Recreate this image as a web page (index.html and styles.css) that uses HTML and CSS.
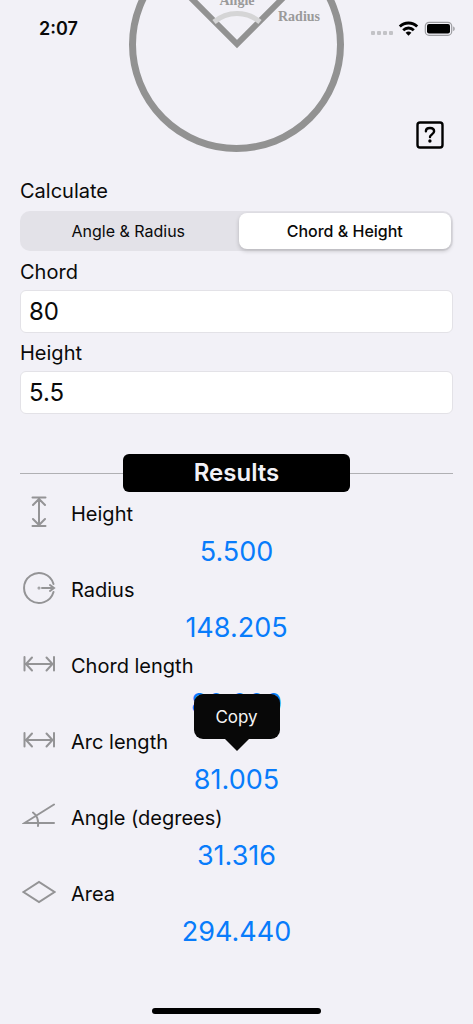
FILE: index.html
```html
<!DOCTYPE html>
<html lang="en">
<head>
<meta charset="utf-8">
<meta name="viewport" content="width=device-width, initial-scale=1">
<title>Arc calculator</title>
<link rel="stylesheet" href="styles.css">
</head>
<body>
<div class="app">
  <div class="status-bar">
    <span class="clock">2:07</span>
    <svg class="status-icons" width="84" height="16" viewBox="0 0 84 16" aria-hidden="true">
      <g fill="#c3c3c7"><rect x="0" y="10" width="4" height="4" rx="1"/><rect x="6" y="10" width="4" height="4" rx="1"/><rect x="12" y="10" width="4" height="4" rx="1"/><rect x="18" y="10" width="4" height="4" rx="1"/></g>
      <g fill="none" stroke="#000" stroke-width="2.8"><path d="M28.800 5.600a12.300 12.300 0 0 1 17.400 0"/><path d="M32.200 9.200a7.500 7.500 0 0 1 10.600 0"/></g>
      <path d="M34.600 11.800a4.300 4.300 0 0 1 5.800 0L37.500 14.800z"/>
      <rect x="54.300" y="1.300" width="26.400" height="13" rx="3.800" fill="none" stroke="#9c9ca0" stroke-width="1.200"/>
      <rect x="56" y="3" width="23" height="9.600" rx="2"/>
      <path d="M82.200 5.500c2 .5 2 4 0 4.500z" fill="#9c9ca0"/>
    </svg>
  </div>

  <header class="hero">
    <svg class="diagram" width="216" height="152" viewBox="0 0 216 152" role="img" aria-label="Circle sector with angle and radius">
      <circle cx="107.500" cy="44.500" r="104" fill="none" stroke="#929292" stroke-width="7"/>
      <path d="M58-6 108 44 158-6" fill="none" stroke="#929292" stroke-width="6"/>
      <path d="M85 22Q95 13.500 108 13.500T131 22" fill="none" stroke="#d5d5d6" stroke-width="5"/>
      <text class="diagram-label" x="108" y="5" text-anchor="middle">Angle</text>
      <text class="diagram-label" x="149" y="21">Radius</text>
    </svg>
    <button class="help" type="button" aria-label="Help">
      <svg width="28" height="28" viewBox="0 0 28 28" fill="none" stroke="#000" stroke-width="2.400" aria-hidden="true">
        <rect x="1.500" y="1.500" width="25" height="25" rx="2.500"/>
        <path d="M9.900 10.200C9.900 8 11.600 7 14 7s4.100 1.300 4.100 3.300c0 1.700-1 2.300-2.200 3.100-1.300.8-1.900 1.400-1.900 2.700" stroke-linecap="round"/>
        <circle cx="13.900" cy="20" r="1.700" fill="#000" stroke="none"/>
      </svg>
    </button>
  </header>

  <main class="content">
    <form class="form">
      <fieldset class="mode">
        <legend class="field-label">Calculate</legend>
        <div class="segments">
          <label class="segment"><input type="radio" name="mode" value="angle"><span>Angle &amp; Radius</span></label>
          <label class="segment"><input type="radio" name="mode" value="chord" checked><span>Chord &amp; Height</span></label>
        </div>
      </fieldset>
      <label class="field-label" for="chord">Chord</label>
      <input class="field" id="chord" type="text" inputmode="decimal" value="80">
      <label class="field-label" for="height">Height</label>
      <input class="field" id="height" type="text" inputmode="decimal" value="5.5">
    </form>

    <h2 class="results-title"><span>Results</span></h2>

    <dl class="results">
      <div class="result">
        <dt><svg class="icon" width="34" height="34" viewBox="0 0 34 34"><path d="M10.500 2.500h13M10.500 31h13M17 4v26M11 10l6-6 6 6M11 24l6 6 6-6"/></svg>Height</dt>
        <dd>5.500</dd>
      </div>
      <div class="result">
        <dt><svg class="icon" width="34" height="34" viewBox="0 0 34 34"><path d="M31.500 13A15 15 0 1 0 31.500 21M20 17h11M28 14l4 3-4 3"/><circle cx="17" cy="17" r=".5"/></svg>Radius</dt>
        <dd>148.205</dd>
      </div>
      <div class="result">
        <dt><svg class="icon" width="34" height="34" viewBox="0 0 34 34"><path d="M2.500 10v13.500M32 10v13.500M3 17h28M10 10.500l-6 6.500 6 6.500M24.500 10.500l6 6.500-6 6.500"/></svg>Chord length</dt>
        <dd>80.000</dd>
      </div>
      <div class="result">
        <dt><svg class="icon" width="34" height="34" viewBox="0 0 34 34"><path d="M2.500 10v13.500M32 10v13.500M3 17h28M10 10.500l-6 6.500 6 6.500M24.500 10.500l6 6.500-6 6.500"/></svg>Arc length</dt>
        <dd>81.005<button class="copy" type="button">Copy</button></dd>
      </div>
      <div class="result">
        <dt><svg class="icon" width="34" height="34" viewBox="0 0 34 34"><path d="M32 5.500 2.500 24H32M11 13.500Q17 18 16 27"/></svg>Angle (degrees)</dt>
        <dd>31.316</dd>
      </div>
      <div class="result">
        <dt><svg class="icon" width="34" height="34" viewBox="0 0 34 34"><path d="M1.500 17 17 7 32.500 17 17 27z"/></svg>Area</dt>
        <dd>294.440</dd>
      </div>
    </dl>
  </main>
  <div class="home-indicator"></div>
</div>
</body>
</html>
```
FILE: styles.css
```css
* {
  box-sizing: border-box;
}

body {
  margin: 0;
  background: #f2f1f7;
  color: #0a0a0a;
  font-family: Inter, "Liberation Sans", sans-serif;
}

button,
input {
  font-family: inherit;
  color: inherit;
}

.app {
  position: relative;
  display: flex;
  flex-direction: column;
  min-height: 100vh;
}

.status-bar {
  position: absolute;
  top: 18px;
  left: 0;
  right: 0;
  display: flex;
  justify-content: space-between;
  align-items: center;
  padding: 0 18px 0 39px;
}

.clock {
  font-size: 18px;
  line-height: 22px;
  font-weight: 600;
}

.hero {
  display: grid;
  grid-template-columns: 1fr auto 1fr;
  align-items: end;
  padding: 0 29px;
}

.diagram {
  grid-column: 2;
}

.diagram-label {
  font: bold 14px "Liberation Serif", serif;
  fill: #9a9a9a;
}

.help {
  justify-self: end;
  display: flex;
  margin-bottom: 3px;
  padding: 0;
  border: 0;
  background: none;
}

.content {
  padding: 25px 20px 0;
}

.form {
  display: flex;
  flex-direction: column;
}

.mode {
  min-width: 0;
  margin: 0;
  padding: 0;
  border: 0;
}

.field-label {
  display: block;
  padding: 0;
  font-size: 20px;
  line-height: 28px;
}

.mode .field-label {
  margin-bottom: 6px;
}

.segments {
  display: grid;
  grid-template-columns: 1fr 1fr;
  gap: 4px;
  height: 40px;
  margin-bottom: 7px;
  padding: 2px;
  border-radius: 10px;
  background: #e3e2e8;
}

.segment {
  display: grid;
}

.segment input {
  grid-area: 1 / 1;
  appearance: none;
  margin: 0;
  border-radius: 8px;
}

.segment input:checked {
  background: #fff;
  box-shadow: 0 2px 4px rgba(0, 0, 0, 0.2);
}

.segment span {
  grid-area: 1 / 1;
  place-self: center;
  z-index: 1;
  font-size: 16px;
  line-height: 20px;
}

.segment input:checked + span {
  font-weight: 500;
}

.field {
  width: 100%;
  height: 43px;
  margin: 4px 0 6px;
  padding: 0 8px;
  border: 1px solid #e3e2e7;
  border-radius: 6px;
  background: #fff;
  font-size: 24px;
}

.results-title {
  display: grid;
  grid-template-columns: 1fr 227px 1fr;
  align-items: center;
  margin: 34px 0 3px;
  font-size: 24px;
  line-height: 38px;
  font-weight: 600;
  text-align: center;
}

.results-title::before,
.results-title::after {
  content: "";
  height: 1px;
  background: #b0b0b3;
}

.results-title span {
  border-radius: 6px;
  background: #000;
  color: #f2f1f7;
}

.results {
  margin: 0;
}

.result dt {
  display: flex;
  align-items: center;
  gap: 15px;
  padding-left: 2px;
  font-size: 20px;
  line-height: 38px;
}

.result dd {
  position: relative;
  margin: 0;
  color: #087cfb;
  font-size: 27px;
  line-height: 38px;
  text-align: center;
}

.icon {
  margin-bottom: 4px;
  fill: none;
  stroke: #949496;
  stroke-width: 2;
  stroke-linecap: round;
}

.copy {
  position: absolute;
  bottom: 60px;
  left: 50%;
  width: 86px;
  height: 45px;
  transform: translateX(-50%);
  border: 0;
  border-radius: 9px;
  background: #080808;
  color: #f5f5f5;
  font-size: 17px;
}

.copy::after {
  content: "";
  position: absolute;
  top: 100%;
  left: 50%;
  margin-left: -12px;
  border: 12px solid transparent;
  border-top-color: #080808;
  border-bottom: 0;
}

.home-indicator {
  width: 169px;
  height: 6px;
  margin: auto auto 10px;
  border-radius: 3px;
  background: #000;
}
```
